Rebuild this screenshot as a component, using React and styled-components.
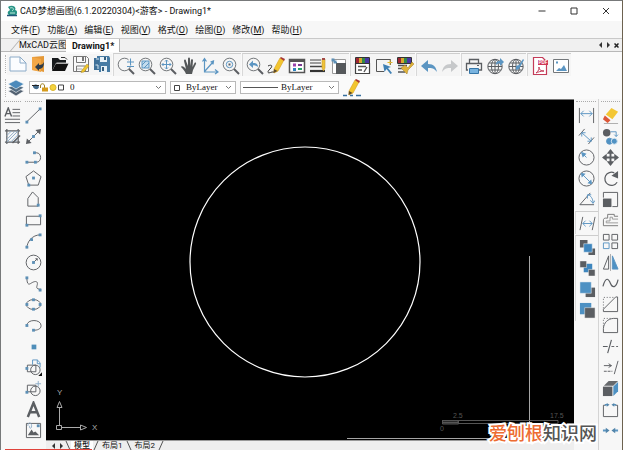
import React from "react";
import styled, { createGlobalStyle, css } from "styled-components";

const GlobalStyle = createGlobalStyle`
  * { box-sizing: border-box; }
  body { margin: 0; background: #fafafa; }
  button, select { font: inherit; color: inherit; margin: 0; padding: 0; border: 0; background: none; }
`;

const INK = "#5b5e62";
const BLUE = "#5b95c2";
const PALE = "#8cabc8";

const Window = styled.div`
  position: relative;
  display: flex;
  flex-direction: column;
  height: 100vh;
  overflow: hidden;
  border-top: 1px solid #77797a;
  border-left: 1px solid #77797a;
  border-right: 1px solid #6d6250;
  background: #fafafa;
  color: #111;
  font-family: "Roboto", "Noto Sans CJK SC", sans-serif;
  font-size: 9px;
  line-height: 14px;
`;

const TitleBar = styled.header`
  display: flex;
  align-items: center;
  flex: 0 0 20px;
  padding-left: 6px;
  background: #fff;
`;

const Title = styled.h1`
  flex: 1;
  margin: 0;
  padding-left: 3px;
  font-size: 9px;
  font-weight: 400;
  white-space: nowrap;
`;

const WindowButton = styled.button`
  display: flex;
  align-items: center;
  justify-content: center;
  width: 32px;
  height: 20px;
`;

const MenuBar = styled.nav`
  display: flex;
  align-items: center;
  gap: 7px;
  flex: 0 0 17px;
  padding-left: 10px;
  background: #f7f7f7;
`;

const MenuItem = styled.button`
  white-space: nowrap;
  line-height: 14px;
`;

const TabBar = styled.div`
  display: flex;
  align-items: flex-end;
  flex: 0 0 14px;
  padding-left: 8px;
  background: #f0f0f0;
  border-top: 1px solid #c9c9c9;
  border-bottom: 1px solid #b8b8b8;
`;

const Tab = styled.button`
  position: relative;
  z-index: 0;
  width: 57px;
  height: 12px;
  padding: 0 0 0 10px;
  line-height: 12px;
  text-align: left;
  white-space: nowrap;
  overflow: hidden;
  &::before {
    content: "";
    position: absolute;
    z-index: -1;
    inset: 0 -12px 0 6px;
    border-left: 1px solid #b0b0b0;
    border-top: 1px solid #d0d0d0;
    transform: skewX(-40deg);
  }
  ${({ $active }) => $active && css`
    width: 54px;
    height: 13px;
    margin-bottom: -1px;
    padding-left: 6px;
    background: #fff;
    border-right: 1px solid #b0b0b0;
    font-weight: 700;
    &::before { display: none; }
  `}
`;

const TabControls = styled.div`
  display: flex;
  align-items: center;
  align-self: center;
  margin-left: auto;
  padding-right: 2px;
`;

const TabControl = styled.button`
  display: flex;
  width: 8px;
  height: 9px;
  align-items: center;
  justify-content: center;
`;

const ToolRow = styled.div`
  display: flex;
  align-items: center;
  flex: 0 0 22px;
  padding-left: 4px;
  background: #fafafa;
`;

const ToolGroup = styled.div`
  display: flex;
  flex-direction: ${({ $vertical }) => ($vertical ? "column" : "row")};
  ${({ $vertical }) => $vertical
    ? css`& + & { border-top: 1px solid #cdcdcd; margin-top: 1px; padding-top: 1px; }`
    : css`background: #f5f5f5; & + & { border-left: 1px solid #d8d8d8; margin-left: 1px; padding-left: 1px; }`}
`;

const ToolButton = styled.button`
  display: flex;
  align-items: center;
  justify-content: center;
  width: 21px;
  height: 21px;
  flex: none;
`;

const Grip = styled.span`
  flex: none;
  ${({ $vertical }) => $vertical
    ? css`align-self: stretch; height: 3px; margin: 2px 2px 1px; border-top: 1px dotted #aaa;`
    : css`width: 2px; height: 18px; border-left: 1px dotted #b5b5b5;`}
`;

const PropertyRow = styled(ToolRow)`
  flex-basis: 23px;
  gap: 4px;
`;

const LayerTools = styled.div`
  display: flex;
  align-items: center;
`;

const SmallToolButton = styled(ToolButton)`
  width: 18px;
`;

const Field = styled.label`
  position: relative;
  display: flex;
  align-items: center;
  flex: 0 1 ${({ $basis }) => $basis};
  height: 13px;
  padding-left: 2px;
  border: 1px solid #b9b9b9;
  background: #fff;
  font-family: "Liberation Serif", serif;
  font-size: 9px;
`;

const Choice = styled.select`
  flex: 1;
  min-width: 0;
  height: 11px;
  padding-left: ${({ $indent }) => $indent};
  appearance: none;
  outline: 0;
  line-height: 11px;
`;

const FieldArrow = styled.span`
  display: flex;
  flex: none;
  width: 10px;
  pointer-events: none;
`;

const Workspace = styled.div`
  display: flex;
  flex: 1;
  min-height: 0;
`;

const SideBar = styled.aside`
  display: flex;
  flex: none;
  padding: ${({ $pad }) => $pad};
  background: #f7f7f7;
`;

const ToolColumn = styled.div`
  display: flex;
  flex-direction: column;
  width: ${({ $wide }) => ($wide ? "24px" : "21px")};
  align-items: center;
  border-left: ${({ $ruled }) => ($ruled ? "1px solid #d4d4d4" : "0")};
`;

const Center = styled.main`
  display: flex;
  flex: 1;
  min-width: 0;
  flex-direction: column;
`;

const Canvas = styled.div`
  flex: 1;
  min-height: 0;
  border-top: 1px solid #777;
  background: #000;
`;

const Drawing = styled.svg`
  display: block;
  width: 100%;
  height: 100%;
  font-family: "Liberation Sans", sans-serif;
`;

const SheetBar = styled.div`
  display: flex;
  flex: 0 0 10px;
  align-items: flex-start;
  padding-left: 3px;
  border-top: 1px solid #999;
  background: #eee;
`;

const SheetTab = styled.button`
  height: 9px;
  padding: 0 3px;
  font-size: 8px;
  line-height: 9px;
  white-space: nowrap;
  font-weight: ${({ $active }) => ($active ? 500 : 400)};
  background: ${({ $active }) => ($active ? "#fff" : "transparent")};
`;

const Progress = styled.div`
  position: absolute;
  z-index: 1;
  left: 4px;
  bottom: 0;
  width: 14%;
  height: 1px;
  background: #e0433c;
`;

const Watermark = styled.div`
  position: absolute;
  right: 25px;
  bottom: 5px;
  color: #555;
  font-family: "Noto Sans CJK SC", sans-serif;
  font-size: 18px;
  font-weight: 500;
  line-height: 26px;
  white-space: nowrap;
  -webkit-text-stroke: 4px #fff;
  paint-order: stroke fill;
`;

const Accent = styled.span`
  color: #ed6c32;
`;

const Lens = ({ children }) => (
  <>
    <circle cx="7.5" cy="7.5" r="6.3" stroke="#73777a" />
    <path d="m12 12 5 5" stroke={INK} strokeWidth="2" />
    {children}
  </>
);

const Palette = () => (
  <>
    <path d="M2 1h3v5H2z" fill="#9d2632" stroke="none" />
    <path d="M5 1h3v5H5z" fill="#d6a62d" stroke="none" />
    <path d="M8 1h3v5H8z" fill="#318b48" stroke="none" />
    <path d="M11 1h4v5h-4z" fill="#4937a4" stroke="none" />
    <path d="M1.5.5h14v6h-14z" stroke="#333" />
  </>
);

const Pencil = () => (
  <>
    <path d="m7 12 6-11 4 2-6 11-4 2z" fill="#f2c52f" stroke="#d9a022" strokeWidth=".6" />
    <path d="m13 1 1-1 4 2-1 2z" fill="#a83835" stroke="none" />
    <path d="m7 12-.5 4 4-2z" fill="#5d4a2c" stroke="none" />
  </>
);

const Globe = () => (
  <>
    <circle cx="9" cy="9.500" r="7.200" />
    <ellipse cx="9" cy="9.500" rx="3.500" ry="7.200" />
    <path d="M9 2.500v14M2 9.500h14M3 6h12M3 13h12" />
  </>
);

const Node = ({ at }) => at.map(([x, y]) => (
  <path key={`${x}-${y}`} d={`M${x - 1.5} ${y - 1.5}h3v3h-3z`} fill="#5c8fb5" stroke="none" />
));

const icons = {
  new: <><path d="M1 2h10l6 6v8H1z" fill="#fbfdff" stroke={PALE} /><path d="M11 2v6h6" stroke={PALE} /></>,
  open: <><path d="M2 2 14 1v16l-4-1-8-1z" fill="#e49837" stroke="none" /><path d="m2 2 9 2v13l-9-2z" fill="#f2a746" stroke="none" /><path d="M5 12 9 8v2c3 0 4-1 5-3 0 5-2 7-5 7v2z" fill="#2e3c48" stroke="none" /></>,
  folder: <><path d="M1 16V3h6l2 2h6v3H5z" fill="#171a1c" stroke="none" /><path d="M5 8.500h12.500L14 16H1z" fill="#111" stroke="none" /><path d="M5.500 8h12" stroke="#eee" strokeWidth=".8" /><path d="M10 2.500h4l2 2" stroke="#333" /></>,
  save: <><path d="M1.500 1.500h13l2 2v13h-15z" fill="#f9f9f9" stroke="#777" /><path d="M4.500 1.500v6h9v-6M4.500 16v-5h9v5" stroke="#777" /><path d="M10 2h2v4h-2z" fill="#777" stroke="none" /><path d="M5 14h5" stroke="#aaa" /><path d="m10 15 5-6 2 2-5 6-3 .5z" fill="#f0c52b" stroke="#a58526" strokeWidth=".5" /></>,
  saveAll: <><path d="M1 3h11v12H1z" fill="#3f7098" stroke="none" /><path d="M4 1h12l1 2v14H6V5H4z" fill="#477ba4" stroke="none" /><path d="M7 2h7v5H7zM8 11h6v6H8z" fill="#e8f1f7" stroke="none" /><path d="M12 2v3M10 12v4" stroke="#345d7e" strokeWidth="2" /><path d="M3 4h3M2.500 10H5v4" stroke="#d5e6f1" /></>,
  zoom: <Lens><path d="M9 5.500h8M13 1.500v8" stroke="#f4f4f4" strokeWidth="3" /><path d="M10 5h7M13.500 1.500v7M10 9.500h7" stroke={BLUE} /></Lens>,
  zoomWindow: <Lens><path d="M4 4h7v7H4z" fill="#c4dced" stroke={BLUE} /><path d="m4 8 4-4m-2 7 5-5" stroke={BLUE} /></Lens>,
  zoomAll: <Lens><path d="M7.500 3v9M3 7.500h9M6 4.500 7.500 3 9 4.500m-3 6L7.500 12 9 10.500M4.500 6 3 7.500 4.500 9m6-3L12 7.500 10.500 9" stroke={BLUE} /></Lens>,
  hand: <path d="M6 17c-1-3-3-5-5-7 0-1 2-1 3 0l2 2-2-8c0-2 2-2 2 0l2 5V2c0-2 2-2 2 0v7l1-6c0-1 2-1 2 0l-.5 7 2-4c1-1 2 0 1.500 1L13 13l-1 4z" fill="#55585a" stroke="none" />,
  axes: <path d="M3.500 2v13h13M4 14 12 5M1.500 4.500l2-3 2 3m8.500 8 3 2.500-3 2M9.500 5l3-1-.5 3.500" stroke={BLUE} strokeWidth="1.200" />,
  zoomCenter: <Lens><circle cx="7.500" cy="7.500" r="3.200" stroke={BLUE} /><path d="M6.500 6.500h2v2h-2z" fill={INK} stroke="none" /></Lens>,
  zoomBack: <Lens><path d="m3 7.500 4-4V6c3 0 5 1 5 4-2-1-3-2-5-1.500V11z" fill={BLUE} stroke="none" /></Lens>,
  draw: <><path d="M1 9c4-2 5 0 2 3-3 3-3 5 2 3h3" stroke="#333" /><Pencil /></>,
  table: <><path d="M1.500 2.500h15v13h-15z" fill="#fff" stroke="#555" strokeWidth="1.500" /><path d="M2 2h14v3H2z" fill="#555" stroke="none" /><path d="M5 6.500h3v3H5z" fill="#9c46ae" stroke="none" /><path d="M5 11h3v3H5z" fill="#3184bf" stroke="none" /><path d="M10 8h4" stroke="#7b3b91" strokeWidth="2" /><path d="M10 12h4" stroke="#28a169" strokeWidth="2" /></>,
  lines: <><path d="M1 3h11M1 6h11" stroke="#444" /><path d="M1 9.500h12" stroke="#444" strokeWidth="1.500" /><path d="M1 14h15" stroke="#333" strokeWidth="2.200" /><path d="M13 2h3v9l-1.500 3-1.500-3z" fill="#efc23a" stroke="#c79a2a" strokeWidth=".6" /><path d="M13 1h3v2h-3z" fill="#a34a44" stroke="none" /></>,
  block: <><path d="M2.500 2.500h13v14h-13z" fill="#fff" stroke="#999" /><path d="M6 6h10v11H6z" fill="#55585b" stroke="none" /><path d="m2 2 5 4" stroke="#4c789b" /><Node at={[[3, 3], [5, 5]]} /></>,
  properties: <><path d="M1.500 6v10.500h14V6" fill="#fff" stroke="#444" strokeWidth="1.200" /><Palette /><path d="M4 9.500h8M4 13h4M10 15l3-5" stroke="#555" strokeWidth="1.400" /></>,
  select: <><path d="M9 14.500H1.500v-12h14V8" stroke="#555" /><path d="m8 7 8 3-3 1 4 5-1.500 1-4-5-2 3z" fill="#3f81b5" stroke="none" /><path d="M15 3v5m-2.500-2.500h5" stroke="#e1b62e" /></>,
  brush: <><Palette /><path d="M2 8.500h9M2 11.500h7M2 15h7" stroke="#555" strokeWidth="1.300" /><path d="m9 8 3 3 4-6 2 2-6 6-1 4-6-6z" fill="#dfb23a" stroke="#a37d24" strokeWidth=".5" /></>,
  undo: <path d="m1 9 7-6v4c6 0 8 3 9 8-3-4-5-4-9-4v4z" fill={BLUE} stroke="none" />,
  redo: <path d="m17 9-7-6v4c-6 0-8 3-9 8 3-4 5-4 9-4v4z" fill="#c6c8ca" stroke="none" />,
  print: <><path d="M4.500 6V2.500h9V6M3 13H1.500V6.500h15V13H14" strokeWidth="1.300" /><path d="M4.500 11.500h9v5h-9z" fill="#78b3df" stroke="#3475a7" /><path d="M12 8.500h2" /></>,
  globeUp: <><Globe /><path d="M10 8c0-3 1-4 4-4V1l4 4-4 4V6.500c-2 0-3 0-4 1.500z" fill={BLUE} stroke="none" /></>,
  globeEdit: <><Globe /><path d="M17 3 12 12l-3 1V9l3-1 4-6z" fill={BLUE} stroke="none" /></>,
  pdf: <><path d="M2.500.5h9l4 4v13h-13z" fill="#fff" stroke="#c43b58" strokeWidth="1.200" /><path d="M7 3h10v5H7z" fill="#cf3655" stroke="none" /><text x="7.500" y="7" fontSize="4.500" fill="#fff" stroke="none" fontFamily="Liberation Sans" fontWeight="700">PDF</text><path d="M5 16c2-2 4-4 3-6-1 2 2 4 5 4-3 0-6 1-8 2z" stroke="#c43b58" /></>,
  image: <><path d="M1.500 2.500h15v13h-15z" fill="#fff" stroke="#73777a" /><path d="m4 14 3-3 2 1 3-4 3 6z" fill={BLUE} stroke="none" /><path d="M4 4.500h2v2H4z" fill={BLUE} stroke="none" /></>,
  layers: <><path d="m1 12 8-3 8 3-8 5z" fill="#526171" stroke="#fff" strokeWidth=".6" /><path d="m1 8.500 8-3 8 3-8 5z" fill="#526b80" stroke="#fff" strokeWidth=".6" /><path d="m1 5 8-4 8 4-8 5z" fill="#4b8abb" stroke="#fff" strokeWidth=".6" /></>,
  stylePencil: <><g transform="translate(-1 0)"><Pencil /></g><path d="M0 16.500h4m3 0h3m3 0h5" stroke="#376f9e" strokeWidth="1.500" /></>,

  mtext: <><path d="M1 10 4.500 1 8 10M2.300 7h4.400" strokeWidth="1.500" /><path d="M9 2.500h8M9 6h8M9 9.500h8M1 13h16M1 16.500h16" /></>,
  hatch: <><path d="M3 1v16M15 1v16M1 3h16M1 15h16" strokeWidth="1.300" /><path d="m3 8 5-5M3 12l9-9M3 15 15 3M7 15l8-8M11 15l4-4" stroke={PALE} /><path d="m9 16 8-8" strokeWidth="1.500" /></>,
  line: <><path d="M2 15.500 16 2" /><Node at={[[2, 16], [16, 2]]} /></>,
  ray: <><path d="m3 15 12-12" /><path d="m1 17 1-6 5 5zM17 1l-6 1 5 5z" fill={INK} stroke="none" /><Node at={[[9, 9]]} /></>,
  polyline: <><path d="M2 14h10c6 0 6-10 0-10h-2" /><Node at={[[2, 14], [11, 14], [10, 4]]} /></>,
  pentagon: <><path d="m9 1 8 6-3 9H4L1 7z" /><Node at={[[9, 8.5], [4, 16]]} /></>,
  polygon: <><path d="m3 8 5-7 6 6v9H3z" /><Node at={[[14, 15]]} /></>,
  rectangle: <><path d="M1.500 4.500h15v9h-15z" /><Node at={[[2, 14], [16, 4]]} /></>,
  arc: <><path d="M2 16C2 9 8 2 16 2" /><Node at={[[2, 15], [7, 7], [16, 2]]} /></>,
  circle: <><circle cx="9" cy="9" r="7.800" /><path d="m9 9 4-4M11 5h2v2" /><Node at={[[9, 9]]} /></>,
  spline: <><path d="M2 3c0 5 1 8 4 6s6-3 7-1c1 3-3 6 2 7h2" /><Node at={[[2, 3], [16, 16]]} /></>,
  ellipse: <><ellipse cx="9" cy="9" rx="7.500" ry="5.200" /><Node at={[[9, 4], [2, 9], [16, 9], [9, 14]]} /></>,
  ellipseArc: <><path d="M2 9c0-7 15-7 15 0 0 4-4 5-8 5" /><Node at={[[2, 9], [9, 14]]} /></>,
  point: <path d="M7 7h5v5H7z" fill="#4f8eb9" stroke="none" />,
  insert: <><path d="M2.500 6.500h9v7h-9z" /><circle cx="11" cy="11.500" r="5" /><path d="M8 6V1h5l3 3v5M13 1v4h3" stroke={BLUE} /><path d="m18 18h-4l4-4z" fill="#111" stroke="none" /><Node at={[[2, 10]]} /></>,
  createBlock: <><path d="M2.500 5.500h9v7h-9z" /><circle cx="11" cy="11.500" r="5" /><path d="M14 1v6m-3-3h6" stroke={PALE} /><Node at={[[2, 13]]} /></>,
  text: <path d="M3 17 9 2l6 15M5 12h8" strokeWidth="2.600" />,
  raster: <><path d="M1.500 1.500h15v15h-15z" /><path d="m3 14 4-6 2 3 2-1 4 4z" fill={INK} stroke="none" /><path d="M3 4c0-4 4-4 4 0s-3 3-2 0" stroke={PALE} /><Node at={[[14, 4]]} /></>,

  linear: <><path d="M1.500 1v16M16.500 1v16" /><path d="M3 7h12M6 4 3 7l3 3m6-6 3 3-3 3" stroke={BLUE} /></>,
  aligned: <><path d="m1 8 6-7M11 17l6-7" /><path d="m4 5 10 9M4 9V5h4m6 5v4h-4" stroke={BLUE} /></>,
  radius: <><circle cx="9" cy="9" r="8" /><path d="m9 9-5-5" stroke={BLUE} /><path d="m3 3 6 2-4 4z" fill={BLUE} stroke="none" /></>,
  diameter: <><circle cx="9" cy="9" r="8" /><path d="m4 4 10 10" stroke={BLUE} /><path d="m3 3 5 1-4 4zm12 12-5-1 4-4z" fill={BLUE} stroke="none" /></>,
  angle: <><path d="M13 2 2 14.500h15" /><path d="M11 4c4 2 5 6 5 9M10 8V4h4m-1 6 3 3 2-3" stroke={BLUE} /></>,
  jog: <><path d="M4 2 1 16M17 2l-3 14" /><path d="M4 9h10M7 6 4 9l3 3m4-6 3 3-3 3" stroke={BLUE} /></>,
  front: <><path d="M1 1h8v8H1zM10 10h7v7h-7z" fill={INK} stroke="none" /><path d="M5 5h9v9H5z" fill="#3e86be" stroke="#f7f7f7" strokeWidth=".5" /></>,
  back: <><path d="M5 4h9v9H5z" fill="#3e86be" stroke="none" /><path d="M1 1h7v7H1zM10 10h7v7h-7z" fill={INK} stroke="#f7f7f7" strokeWidth=".5" /></>,
  above: <><path d="M7 7h10v10H7z" fill={INK} stroke="none" /><path d="M1 1h12v12H1z" fill="#4e91c3" stroke="#f7f7f7" strokeWidth=".5" /></>,
  below: <><path d="M1 1h12v12H1z" fill="#4e91c3" stroke="none" /><path d="M6 6h11v11H6z" fill={INK} stroke="#f7f7f7" strokeWidth=".5" /></>,
  erase: <><path d="m10 1 7 4-6 8-7-5z" fill="#f3c735" stroke="none" /><path d="m3 9 6 5-3 3-5-4z" fill="#dc5738" stroke="none" /><path d="M2 17.500h15" stroke="#aaa" /></>,
  copy: <><circle cx="5" cy="5" r="4" fill={INK} stroke="none" /><circle cx="8" cy="14" r="3.200" fill="#5092c3" stroke={BLUE} /><circle cx="13" cy="14" r="3.200" fill="#5092c3" stroke="#d7e7f2" /><path d="M9 4h6v5m-2-2 2 2 2-2" stroke={BLUE} /></>,
  move: <><path d="M9 2v14M2 9h14" strokeWidth="2" /><path d="m9 0 4 5H5zm0 18 4-5H5zM0 9l5-4v8zm18 0-5-4v8z" fill={INK} stroke="none" /></>,
  rotate: <><path d="M13 3a7 7 0 1 0 3 10" strokeWidth="1.300" /><path d="M10 6 17 1v8z" fill={INK} stroke="none" /></>,
  scale: <><path d="M1.500 7V1.500h15v15H11" /><path d="M1 8h9v9H1z" fill={INK} stroke="none" /></>,
  offset: <><path d="M17 4.500h-4v-2H6v4H3.500c-2 0-2 2-2 2v6H17" stroke="#777" /><path d="M17 7.500h-6v-2H8.500v4h-4v2H17" stroke="#999" /></>,
  array: <><path d="M1.500 1.500h6v6h-6zM10.500 1.500h6v6h-6zM10.500 10.500h6v6h-6z" /><path d="M1.500 10.500h6v6h-6z" stroke={BLUE} /></>,
  mirror: <><path d="M7 2v14H1.500z" /><path d="M11 2v14h6z" fill="#4e91c3" stroke={BLUE} /><path d="M9 0v18" stroke="#aaa" /></>,
  wave: <path d="M1 12C4 1 7 4 9 9s6 5 8-4" strokeWidth="1.300" />,
  chamfer: <><path d="m1.500 14 13-13h2v15.500h-15z" /><path d="M1.500 13V1.500H13" strokeDasharray="1 2" /></>,
  fillet: <><path d="M1.500 16.500V12C2 6 6 2 12 1.500h4.500v15z" /><path d="M1.500 10V1.500H10" strokeDasharray="1 2" /></>,
  trim: <><path d="M1 9h5M10 2 6 16" strokeWidth="1.200" /><path d="M10 9h7" strokeDasharray="3 2" /></>,
  extend: <><path d="M2 7h8M7 5l3 2-3 2M17 2l-4 14" /><path d="M2 13h9" strokeDasharray="3 1" /></>,
  cube: <><path d="M1 7h10v10H1z" fill={INK} stroke="none" /><path d="m2 6 5-5h10l-5 5z" fill="#66696c" stroke="none" /><path d="m12 7 5-5v10l-5 5z" fill="#4e91c3" stroke="none" /></>,
  break: <><path d="M4 4.500H1.500v12h15v-12H14" /><path d="M3 4h3m6 0h3" stroke={BLUE} strokeWidth="1.500" /><path d="m5 2 3 2-3 2zm8 0-3 2 3 2z" fill="#5385aa" stroke="none" /></>,
  join: <><path d="M1 9h4m8 0h4" stroke={BLUE} strokeWidth="2" /><path d="m4 6 4 3-4 3zm10 0-4 3 4 3z" fill="#5385aa" stroke="none" /></>,
  minimize: <path d="M5.500 9h7" stroke="#333" />,
  maximize: <path d="M6 6h6v6H6z" stroke="#333" />,
  close: <path d="m6 6 6 6m0-6-6 6" stroke="#333" />,
};

const Icon = ({ name, size = 18 }) => (
  <svg width={size} height={size} viewBox="0 0 18 18" fill="none" stroke={INK} strokeWidth="1" aria-hidden="true">
    {icons[name]}
  </svg>
);

const Tools = ({ names, vertical }) => (
  <ToolGroup $vertical={vertical}>
    {names.map((name) => (
      <ToolButton key={name} type="button" aria-label={name}>
        <Icon name={name} size={vertical ? 17 : 18} />
      </ToolButton>
    ))}
  </ToolGroup>
);

const menus = [["文件", "F"], ["功能", "A"], ["编辑", "E"], ["视图", "V"], ["格式", "O"], ["绘图", "D"], ["修改", "M"], ["帮助", "H"]];

const mainTools = [
  ["new", "open", "folder", "save", "saveAll"],
  ["zoom", "zoomWindow", "zoomAll", "hand", "axes", "zoomCenter"],
  ["zoomBack", "draw", "table", "lines", "block"],
  ["properties", "select", "brush"],
  ["undo", "redo"],
  ["print", "globeUp", "globeEdit"],
  ["pdf", "image"],
];

const drawTools = ["line", "ray", "polyline", "pentagon", "polygon", "rectangle", "arc", "circle", "spline", "ellipse", "ellipseArc", "point", "insert", "createBlock", "text", "raster"];
const dimensionTools = [["linear", "aligned", "radius", "diameter", "angle"], ["jog"], ["front", "back", "above", "below"]];
const editTools = ["erase", "copy", "move", "rotate", "scale", "offset", "array", "mirror", "wave", "chamfer", "fillet", "trim", "extend", "cube", "break", "join"];

const Chevron = () => (
  <FieldArrow>
    <svg width="7" height="5" viewBox="0 0 7 5" fill="none" stroke="#777"><path d="m1 1 2.500 2.500L6 1" /></svg>
  </FieldArrow>
);

const Swatch = () => (
  <svg width="8" height="8" viewBox="0 0 8 8" fill="#fff" stroke="#444"><path d="M1.500 1.500h5v5h-5z" /></svg>
);

const LayerState = () => (
  <svg width="32" height="9" viewBox="0 0 32 9" fill="none">
    <path d="M1 3c3-3 5-1 6 1-1 3-4 3-6 0z" fill="#42698a" />
    <path d="M0 2.500h7" stroke="#222" />
    <path d="M8.500 5V3c0-3 4-3 4 0v2" stroke="#9f8023" />
    <path d="M10 4.500h6v4h-6z" fill="#d59b1c" />
    <circle cx="21" cy="4.500" r="3" fill="#f5d33c" stroke="#dbb52e" />
    <path d="M26.500 2h5v5h-5z" fill="#fff" stroke="#444" />
  </svg>
);

const LineSample = () => (
  <svg width="35" height="5" viewBox="0 0 35 5"><path d="M0 2.500h35" stroke="#555" /></svg>
);

const Slash = ({ back }) => (
  <svg width="6" height="9" viewBox="0 0 6 9" fill="none" stroke="#555"><path d={back ? "m1 0 4 9" : "M5 0 1 9"} /></svg>
);

const Arrow = ({ right }) => (
  <svg width="5" height="6" viewBox="0 0 5 6"><path d={right ? "m1 0 3 3-3 3z" : "M4 0 1 3l3 3z"} fill="#333" /></svg>
);

export default function App() {
  return (
    <Window>
      <GlobalStyle />
      <TitleBar>
        <svg width="10" height="12" viewBox="0 0 10 12" fill="none">
          <path d="M1 2c4-3 9 0 7 3 2 0 3 3 1 5H2C-1 7 2 6 3 5z" fill="#279486" />
          <path d="M3 3c3-1 5 1 2 3M3 8h5" stroke="#bce6db" />
          <path d="M0 10.500h10" stroke="#22577a" strokeWidth="1.500" />
        </svg>
        <Title>CAD梦想画图(6.1.20220304)&lt;游客&gt; - Drawing1*</Title>
        {["minimize", "maximize", "close"].map((name) => (
          <WindowButton key={name} type="button" aria-label={name}><Icon name={name} /></WindowButton>
        ))}
      </TitleBar>
      <MenuBar>
        {menus.map(([label, key]) => (
          <MenuItem key={key} type="button">{label}(<u>{key}</u>)</MenuItem>
        ))}
      </MenuBar>
      <TabBar>
        <Tab type="button">MxCAD云图</Tab>
        <Tab type="button" $active>Drawing1*</Tab>
        <TabControls>
          <TabControl type="button" aria-label="previous tab"><Arrow /></TabControl>
          <TabControl type="button" aria-label="next tab"><Arrow right /></TabControl>
          <TabControl type="button" aria-label="close tab">
            <svg width="5" height="5" viewBox="0 0 5 5" stroke="#222" strokeWidth="1.500"><path d="m.5.500 4 4m0-4-4 4" /></svg>
          </TabControl>
        </TabControls>
      </TabBar>
      <ToolRow>
        <Grip />
        {mainTools.map((names) => <Tools key={names[0]} names={names} />)}
      </ToolRow>
      <PropertyRow>
        <LayerTools>
          <Grip />
          <SmallToolButton type="button" aria-label="layers"><Icon name="layers" /></SmallToolButton>
        </LayerTools>
        <Field $basis="137px">
          <LayerState />
          <Choice $indent="6px" aria-label="layer" defaultValue="0"><option>0</option></Choice>
          <Chevron />
        </Field>
        <Field $basis="66px">
          <Swatch />
          <Choice $indent="5px" aria-label="colour" defaultValue="ByLayer"><option>ByLayer</option></Choice>
          <Chevron />
        </Field>
        <Field $basis="99px">
          <LineSample />
          <Choice $indent="3px" aria-label="line type" defaultValue="ByLayer"><option>ByLayer</option></Choice>
          <Chevron />
        </Field>
        <SmallToolButton type="button" aria-label="edit line type"><Icon name="stylePencil" /></SmallToolButton>
      </PropertyRow>
      <Workspace>
        <SideBar $pad="0 2px 0 1px">
          <ToolColumn><Grip $vertical /><Tools vertical names={["mtext", "hatch"]} /></ToolColumn>
          <ToolColumn><Grip $vertical /><Tools vertical names={drawTools} /></ToolColumn>
        </SideBar>
        <Center>
          <Canvas>
            <Drawing viewBox="0 0 528 340" fill="none" role="img" aria-label="Drawing area">
              <circle cx="259" cy="162" r="115" stroke="#fff" strokeWidth="1.200" />
              <path d="M483.500 156v184M301 338.500h227" stroke="#a5a5a5" />
              <g stroke="#aaa">
                <path d="M10.500 325.500h5v4h-5zM13.500 325v-18M16 327.500h18M11 307.500h5l-2.500-6zM34.500 325v5l6-2.500z" />
              </g>
              <g fill="#aaa" fontSize="8"><text x="11" y="295">Y</text><text x="46" y="330">X</text></g>
              <g stroke="#555"><path d="M396.500 320v4h16v-3M396 320.500h116v3h-100v-3" /><path d="M397 322.500h16" strokeWidth="2" /></g>
              <g fill="#555" fontSize="7"><text x="407" y="318">2.5</text><text x="504" y="318">17.5</text><text x="394" y="331">0</text></g>
            </Drawing>
          </Canvas>
          <SheetBar>
            <TabControl type="button" aria-label="previous sheet"><Arrow /></TabControl>
            <TabControl type="button" aria-label="next sheet"><Arrow right /></TabControl>
            <Slash back />
            <SheetTab type="button" $active>模型</SheetTab>
            <Slash />
            <SheetTab type="button">布局1</SheetTab>
            <Slash back />
            <SheetTab type="button">布局2</SheetTab>
            <Slash />
          </SheetBar>
        </Center>
        <SideBar $pad="0">
          <ToolColumn $wide>
            <Grip $vertical />
            {dimensionTools.map((names) => <Tools key={names[0]} vertical names={names} />)}
          </ToolColumn>
          <ToolColumn $wide $ruled><Grip $vertical /><Tools vertical names={editTools} /></ToolColumn>
        </SideBar>
      </Workspace>
      <Progress />
      <Watermark><Accent>爱刨根</Accent>知识网</Watermark>
    </Window>
  );
}
